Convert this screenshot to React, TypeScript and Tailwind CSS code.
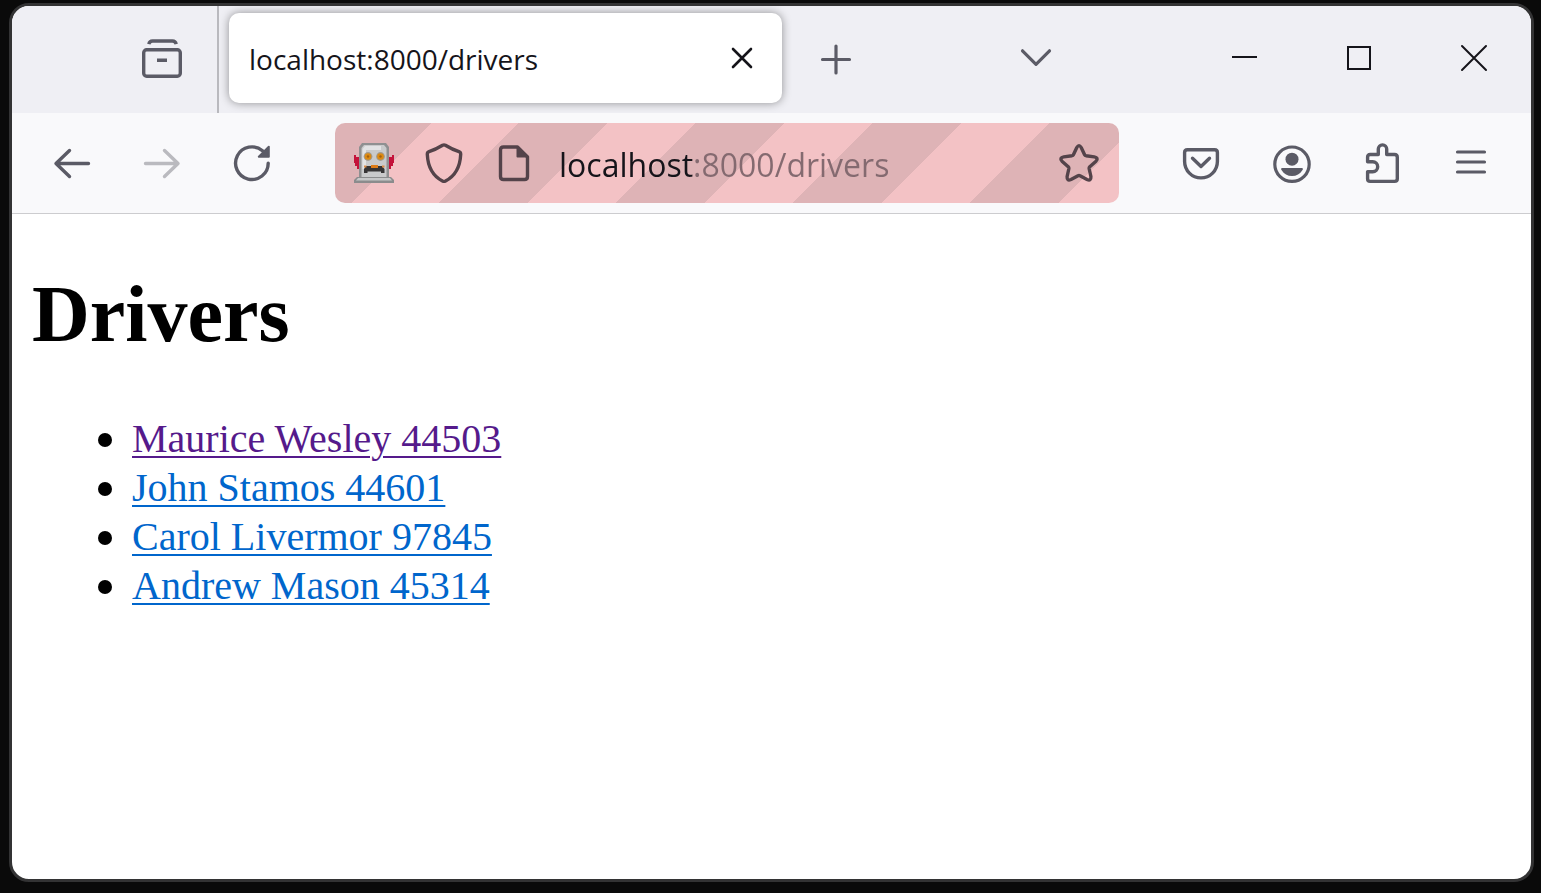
import type { ReactNode } from "react";

type IconProps = { children: ReactNode; className?: string; width?: string };

function Icon({ children, className = "", width = "3.4" }: IconProps) {
  return (
    <svg
      viewBox="0 0 40 40"
      className={`size-10 shrink-0 overflow-visible ${className}`}
      fill="none"
      stroke="currentColor"
      strokeWidth={width}
      strokeLinecap="round"
      strokeLinejoin="round"
      aria-hidden="true"
    >
      {children}
    </svg>
  );
}

type BarButtonProps = { label: string; children: ReactNode; className?: string; disabled?: boolean };

function BarButton({ label, children, className = "w-[90px]", disabled }: BarButtonProps) {
  return (
    <button
      type="button"
      aria-label={label}
      disabled={disabled}
      className={`flex h-20 shrink-0 items-center justify-center text-[#5b5b66] disabled:text-[#bababf] ${className}`}
    >
      {children}
    </button>
  );
}

function RobotIcon() {
  return (
    <svg viewBox="0 0 40 40" className="size-10 shrink-0" aria-hidden="true">
      <path d="M0 12h2v2h4v12H3v-3H1v-3H0z" fill="#c4123a" />
      <path d="M40 12h-2v2h-4v12h3v-3h2v-3h1z" fill="#c4123a" />
      <path d="M8 0H32L35 4V35H5V4Z" fill="#8f9091" />
      <path d="M10 2H30L32.500 5V34H7.500V5Z" fill="#c9cacb" />
      <path d="M11 3H27V7H12V26H8.500V6Z" fill="#e2e3e4" />
      <circle cx="14" cy="13.500" r="4.400" fill="#a39a8d" />
      <circle cx="26.500" cy="13.500" r="4.400" fill="#a39a8d" />
      <circle cx="14" cy="13.500" r="3.300" fill="#dc8a12" />
      <circle cx="26.500" cy="13.500" r="3.300" fill="#dc8a12" />
      <circle cx="14" cy="13.500" r="1.200" fill="#a35f0e" />
      <circle cx="26.500" cy="13.500" r="1.200" fill="#a35f0e" />
      <path d="M12 23H28L30.500 26V30H27V28.500H13.500V30H10V26Z" fill="#373536" />
      <path d="M17 22H24V25H17Z" fill="#dd7c18" />
      <path d="M10 22.500H12.500V24.500H10ZM28 22.500H30.500V24.500H28Z" fill="#d98a45" />
      <path d="M3 34H37L40 37V40H0V37Z" fill="#8b8c8d" />
      <path d="M4 35H36L38 37.500H2Z" fill="#c6c7c8" />
    </svg>
  );
}

function TabStrip() {
  return (
    <header className="flex h-[107px] shrink-0 bg-[#efeff4]">
      <div className="flex w-[207px] shrink-0 justify-end border-r-2 border-[#b9b9be] pt-[12px] pr-[10px]">
        <BarButton label="View recent browsing">
          <Icon>
            <rect x="1.700" y="11.700" width="36.600" height="26.600" rx="3" />
            <path d="M6.800 6.200Q7.500 3 10.500 3H30.500Q33.500 3 34.200 6.200" strokeLinecap="butt" />
            <path d="M15 22.200H25" strokeLinecap="butt" strokeWidth="3.600" />
          </Icon>
        </BarButton>
      </div>
      <div className="flex min-w-0 flex-1 items-center pt-[7px] pb-[10px] pl-[10px]">
        <div className="flex h-[90px] w-[553px] min-w-0 items-center rounded-[10px] bg-white pl-5 shadow-[0_0_10px_rgba(0,0,0,0.4)]">
          <span className="flex-1 truncate pt-[2px] font-['Open_Sans','Noto_Sans',sans-serif] text-[28px] leading-10 text-[#15141a]">
            localhost:8000/drivers
          </span>
          <button type="button" aria-label="Close tab" className="flex w-20 shrink-0 justify-center text-[#15141a]">
            <Icon width="2.6">
              <path d="M11 11L29 29M29 11L11 29" />
            </Icon>
          </button>
        </div>
        <BarButton label="Open a new tab" className="ml-[9px] w-[90px]">
          <Icon width="3.2">
            <path d="M20 8V35M6.500 21.500H33.500" />
          </Icon>
        </BarButton>
        <BarButton label="List all tabs" className="mr-[105px] ml-auto w-[90px]">
          <Icon width="3.2">
            <path d="M6.500 12.800L20 26.300L33.500 12.800" />
          </Icon>
        </BarButton>
        <BarButton label="Minimize" className="w-[115px]">
          <Icon width="2" className="text-[#15141a]">
            <path d="M8 19H33" strokeLinecap="butt" />
          </Icon>
        </BarButton>
        <BarButton label="Maximize" className="w-[115px]">
          <Icon width="2" className="text-[#15141a]">
            <rect x="9" y="9" width="22" height="22" strokeLinejoin="miter" />
          </Icon>
        </BarButton>
        <BarButton label="Close window" className="w-[115px]">
          <Icon width="2" className="text-[#15141a]">
            <path d="M8 8L32 32M32 8L8 32" />
          </Icon>
        </BarButton>
      </div>
    </header>
  );
}

function AddressBar() {
  return (
    <div className="mr-[37px] ml-[38px] flex h-20 min-w-0 flex-1 items-center rounded-[10px] bg-[repeating-linear-gradient(135deg,#deb3b6_0px_68px,#f3c2c5_68px_130px,#deb3b6_130px_193px,#f3c2c5_193px_255px,#deb3b6_255px_318px,#f3c2c5_318px_380px,#deb3b6_380px_443px,#f3c2c5_443px_505px,#deb3b6_505px_568px,#f3c2c5_568px_630px)] pr-5 pl-[19px] text-[#54434a]">
      <RobotIcon />
      <button type="button" aria-label="Tracking protection" className="ml-[30px]">
        <Icon>
          <path d="M18.600 2.300Q20 1.500 21.400 2.300C26 5.100 30.500 7.300 35 8.700Q36.700 9.300 36.700 11.200C36.200 23 32 32.500 21.500 38Q20 38.700 18.500 38C8 32.500 3.800 23 3.300 11.200Q3.300 9.300 5 8.700C9.500 7.300 14 5.100 18.600 2.300Z" />
        </Icon>
      </button>
      <button type="button" aria-label="Site information" className="ml-[30px]">
        <Icon>
          <path d="M9.500 4H23.500L33.500 14V33.500Q33.500 36.500 30.500 36.500H9.500Q6.500 36.500 6.500 33.500V7Q6.500 4 9.500 4Z" />
          <path d="M23.500 4V13.500H33.500Z" fill="currentColor" strokeWidth="2" />
        </Icon>
      </button>
      <input
        type="text"
        aria-label="Address"
        defaultValue="localhost:8000/drivers"
        className="ml-[25px] min-w-0 flex-1 bg-[linear-gradient(90deg,#15141a_136px,#846a70_136px)] bg-clip-text pt-1 font-['Open_Sans','Noto_Sans',sans-serif] text-[32px] leading-[60px] text-transparent caret-[#15141a] outline-none"
      />
      <button type="button" aria-label="Bookmark this page">
        <Icon>
          <path d="M17.800 4.500Q20 0.800 22.200 4.500L25.600 11.700Q26 12.500 27 12.700L35.200 13.900Q40 15 37 18.200L30.800 23.700Q30 24.600 30.100 25.500L31.900 33.500Q32.200 38.500 28 36.500L21 32.700Q20 32.200 19 32.700L12 36.500Q7.800 38.500 8.100 33.500L9.900 25.500Q10 24.600 9.200 23.700L3 18.200Q0 15 4.800 13.900L13 12.700Q14 12.500 14.400 11.700Z" />
        </Icon>
      </button>
    </div>
  );
}

function Toolbar() {
  return (
    <nav className="flex shrink-0 items-center border-b border-[#cccccf] bg-[#f9f9fb] px-[15px] py-[10px]">
      <BarButton label="Back">
        <Icon>
          <path d="M36.500 20.500H4M17.500 7.500L4 20.500L17.500 33.500" />
        </Icon>
      </BarButton>
      <BarButton label="Forward" disabled>
        <Icon>
          <path d="M3.500 20.500H36M22.500 7.500L36 20.500L22.500 33.500" />
        </Icon>
      </BarButton>
      <BarButton label="Reload">
        <Icon>
          <path d="M36.200 20.200A16.300 16.300 0 1 1 30.500 7.800" />
          <path d="M36.800 3.800V13.800H26.800Z" fill="currentColor" strokeWidth="2" />
        </Icon>
      </BarButton>
      <AddressBar />
      <BarButton label="Save to Pocket">
        <Icon>
          <path d="M6.400 6.800H33.600Q36.400 6.800 36.400 9.600V18.500A16.400 16.400 0 0 1 3.600 18.500V9.600Q3.600 6.800 6.400 6.800Z" />
          <path d="M11.500 15.300L20 23.500L28.500 15.300" />
        </Icon>
      </BarButton>
      <BarButton label="Account">
        <Icon width="3.2">
          <circle cx="21" cy="21.200" r="17.200" />
          <g fill="currentColor" stroke="none">
            <circle cx="21" cy="16.200" r="6.500" />
            <path d="M11.500 25H30.500Q32.800 25 31.500 27C29 31 25.500 33 21 33S13 31 10.500 27Q9.200 25 11.500 25Z" />
          </g>
        </Icon>
      </BarButton>
      <BarButton label="Extensions">
        <Icon>
          <path d="M6.600 18.700V14Q6.600 11.500 9.100 11.500H17.300V6.100A4.200 4.200 0 0 1 25.700 6.100V11.500H33.500Q36.300 11.500 36.300 14.300V35.800Q36.300 38.400 33.500 38.400H9.100Q6.600 38.400 6.600 35.800V28.700H11.700A5 5 0 0 0 11.700 18.700Z" />
        </Icon>
      </BarButton>
      <BarButton label="Open application menu">
        <Icon width="3.2">
          <path d="M6.500 9H33.500M6.500 19H33.500M6.500 29H33.500" />
        </Icon>
      </BarButton>
    </nav>
  );
}

const drivers = [
  { name: "Maurice Wesley", number: 44503, visited: true },
  { name: "John Stamos", number: 44601, visited: false },
  { name: "Carol Livermor", number: 97845, visited: false },
  { name: "Andrew Mason", number: 45314, visited: false },
];

export default function App() {
  return (
    <div className="flex min-h-screen flex-col bg-[#0a0a0a] pt-[3px] pr-[7px] pb-[11px] pl-[9px]">
      <div className="flex flex-1 flex-col overflow-hidden rounded-[20px] border-3 border-[#333334] bg-white">
        <TabStrip />
        <Toolbar />
        <main className="flex-1 px-5 py-[54px] font-['Liberation_Serif',serif] text-black">
          <h1 className="text-[80px] leading-[92px] font-bold">Drivers</h1>
          <ul className="mt-[54px] pl-[66px] text-[40px] leading-[49px]">
            {drivers.map((driver) => (
              <li
                key={driver.number}
                className="flex items-center gap-5 before:mt-[2px] before:size-[14px] before:shrink-0 before:rounded-full before:bg-black"
              >
                <a
                  href={`#driver-${driver.number}`}
                  className={`underline decoration-2 underline-offset-4 ${driver.visited ? "text-[#551a8b]" : "text-[#0066cc]"}`}
                >
                  {`${driver.name} ${driver.number}`}
                </a>
              </li>
            ))}
          </ul>
        </main>
      </div>
    </div>
  );
}
